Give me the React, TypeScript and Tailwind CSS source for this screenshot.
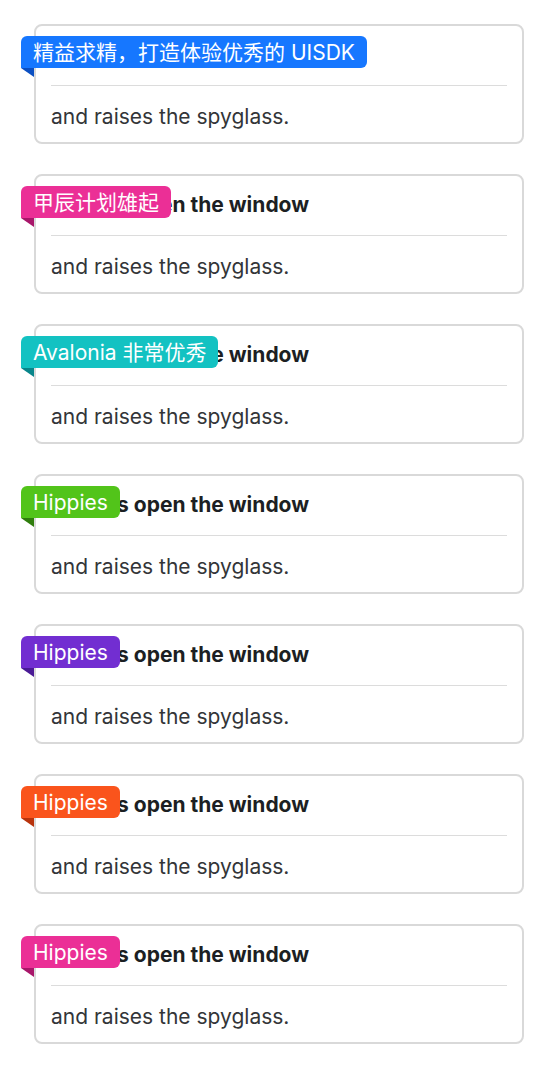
import React from "react";

type Ribbon = { text: string; bg: string; fold: string };

const RIBBONS: Ribbon[] = [
  { text: "精益求精，打造体验优秀的 UISDK", bg: "bg-[#1677ff]", fold: "border-t-[#0b4fc2]" },
  { text: "甲辰计划雄起", bg: "bg-[#eb2f96]", fold: "border-t-[#a8166a]" },
  { text: "Avalonia 非常优秀", bg: "bg-[#13c2c2]", fold: "border-t-[#08858a]" },
  { text: "Hippies", bg: "bg-[#52c41a]", fold: "border-t-[#2f7d0c]" },
  { text: "Hippies", bg: "bg-[#722ed1]", fold: "border-t-[#4a1a95]" },
  { text: "Hippies", bg: "bg-[#fa541c]", fold: "border-t-[#b8330c]" },
  { text: "Hippies", bg: "bg-[#eb2f96]", fold: "border-t-[#a8166a]" },
];

const FONT = { fontFamily: 'Inter, "Noto Sans CJK SC", sans-serif' };

function RibbonCard({ ribbon }: { ribbon: Ribbon }) {
  return (
    <div className="relative">
      <div className="rounded-lg border-2 border-[#d9d9d9] bg-white">
        <div className="mx-[15px] h-[60px] pb-[2px] flex items-center border-b border-[#dcdcdc]">
          <span className="text-[21px] font-bold text-[#1c1f23]">Hippies open the window</span>
        </div>
        <div className="px-[15px] pt-[18px] pb-[12px]">
          <p className="text-[21px] leading-[26px] text-[#333538]">and raises the spyglass.</p>
        </div>
      </div>

      {/* ribbon */}
      <div className="absolute left-[-13px] top-[12px] flex flex-col">
        <div className={`${ribbon.bg} h-8 rounded-md rounded-bl-none px-3 flex items-center text-white text-[21px] leading-none`}>
          {ribbon.text}
        </div>
        <div className={`w-0 h-0 border-t-[9px] border-l-[13px] border-l-transparent ${ribbon.fold}`} />
      </div>
    </div>
  );
}

export default function App() {
  return (
    <div className="bg-white min-h-screen pt-6 pl-[34px] pr-[26px] flex flex-col gap-[30px]" style={FONT}>
      {RIBBONS.map((r, i) => (
        <RibbonCard key={i} ribbon={r} />
      ))}
    </div>
  );
}
